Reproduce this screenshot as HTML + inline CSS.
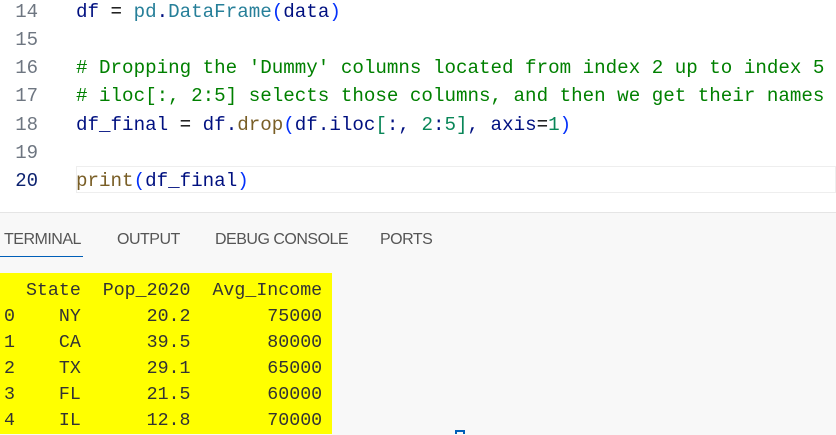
<!DOCTYPE html>
<html><head><style>
body{margin:0;width:836px;height:434px;overflow:hidden;background:#fff;position:relative;font-family:"Liberation Mono",monospace}
.ln{position:absolute;left:0;width:38px;text-align:right;font-size:19px;color:#6e7681;line-height:28px}
.cd{position:absolute;left:76px;font-size:19.2px;line-height:28px;white-space:pre;color:#001080}
.c{color:#008000}.f{color:#795e26}.t{color:#267f99}.n{color:#098658}.p{color:#0431fa}.k{color:#000}
.tab{position:absolute;top:231px;font-family:"Liberation Sans",sans-serif;font-size:16px;color:#555;letter-spacing:-0.5px}
.term{position:absolute;left:0;top:273px;width:332px;height:161px;background:#ffff00}
.term pre{margin:0;position:absolute;left:4px;top:5px;font-family:"Liberation Mono",monospace;font-size:18.3px;line-height:26px;color:#333}
</style></head><body>
<div style="position:absolute;left:76px;top:166px;width:760px;height:27px;border:1px solid #eee;box-sizing:border-box"></div>
<div class="ln" style="top:-2px">14</div>
<div class="ln" style="top:26px">15</div>
<div class="ln" style="top:54px">16</div>
<div class="ln" style="top:82px">17</div>
<div class="ln" style="top:111px">18</div>
<div class="ln" style="top:139px">19</div>
<div class="ln" style="top:167px;color:#0b216f">20</div>
<div class="cd" style="top:-2px">df <span class="k">=</span> <span class="t">pd</span>.<span class="t">DataFrame</span><span class="p">(</span>data<span class="p">)</span></div>
<div class="cd c" style="top:54px"># Dropping the 'Dummy' columns located from index 2 up to index 5</div>
<div class="cd c" style="top:82px"># iloc[:, 2:5] selects those columns, and then we get their names</div>
<div class="cd" style="top:111px">df_final <span class="k">=</span> df.<span class="f">drop</span><span class="p">(</span>df.iloc<span class="n">[</span>:, <span class="n">2</span>:<span class="n">5</span><span class="n">]</span>, axis<span class="k">=</span><span class="n">1</span><span class="p">)</span></div>
<div class="cd" style="top:167px"><span class="f">print</span><span class="p">(</span>df_final<span class="p">)</span></div>
<div style="position:absolute;left:0;top:212px;width:836px;height:222px;background:#f8f8f8;border-top:1px solid #e5e5e5"></div>
<div class="tab" style="left:4px">TERMINAL</div>
<div style="position:absolute;left:0;top:256px;width:83px;height:1px;background:#005fb8"></div>
<div class="tab" style="left:117px">OUTPUT</div>
<div class="tab" style="left:215px">DEBUG CONSOLE</div>
<div class="tab" style="left:380px">PORTS</div>
<div class="term"><pre>  State  Pop_2020  Avg_Income
0    NY      20.2       75000
1    CA      39.5       80000
2    TX      29.1       65000
3    FL      21.5       60000
4    IL      12.8       70000</pre></div>
<div style="position:absolute;left:455px;top:430px;width:10px;height:4px;border:2px solid #005fb8;border-bottom:0;box-sizing:border-box"></div>
</body></html>
